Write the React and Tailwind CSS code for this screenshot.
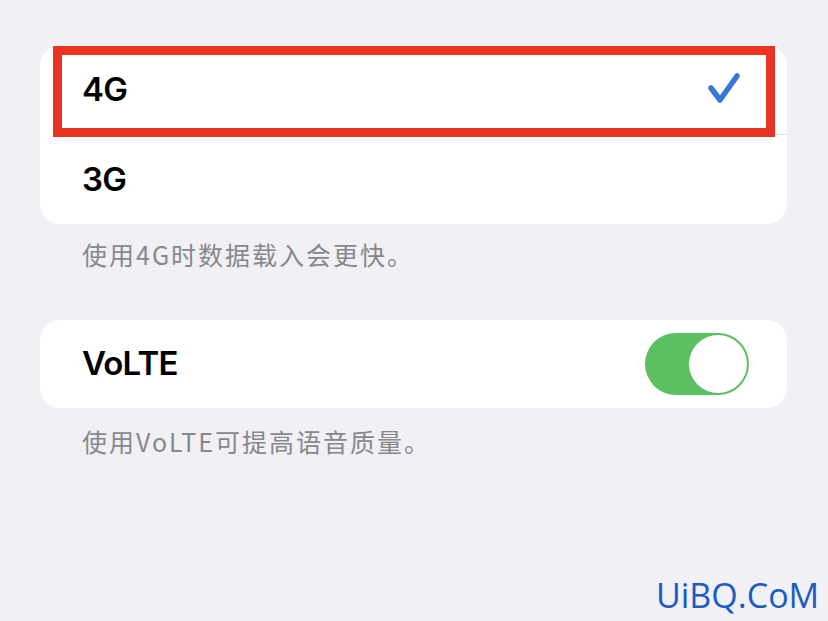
import React from "react";

const sans = { fontFamily: '"Inter", "Noto Sans CJK SC", sans-serif' };
const cjk = { fontFamily: '"Noto Sans CJK SC", sans-serif' };

function Check() {
  return (
    <svg width="36" height="36" viewBox="0 0 36 36" className="absolute left-[705px] top-[71px]">
      <path d="M6 17 L15 29 L32 5" fill="none" stroke="#3a76d6" strokeWidth="5.5" strokeLinecap="round" strokeLinejoin="round" />
    </svg>
  );
}

export default function App() {
  return (
    <div className="relative w-[828px] h-[621px] overflow-hidden bg-[#f0f0f5] flex flex-col" style={sans}>
      <div className="mt-[46px] mx-[40px] w-[747px] bg-white rounded-[20px] flex flex-col">
        <div className="relative h-[88px] flex items-center pl-[42px]">
          <span className="text-[33px] font-semibold text-black tracking-[-0.8px]">4G</span>
        </div>
        <div className="h-px bg-[#dedee3] ml-[42px]" />
        <div className="h-[89px] flex items-center pl-[42px]">
          <span className="text-[33px] font-semibold text-black tracking-[-0.8px]">3G</span>
        </div>
      </div>
      <div className="absolute left-[53px] top-[46px] w-[722px] h-[91px] border-[9px] border-[#ea3422]" />
      <Check />
      <p className="mt-[13px] pl-[82px] text-[25px] leading-[34px] text-[#88888c] tracking-[2px]" style={cjk}>
        使用4G时数据载入会更快。
      </p>

      <div className="mt-[49px] mx-[40px] w-[747px] h-[88px] bg-white rounded-[20px] flex items-center justify-between pl-[42px] pr-[38px]">
        <span className="text-[33px] font-semibold text-black tracking-[-0.8px]">VoLTE</span>
        <div className="w-[104px] h-[62px] rounded-full bg-[#5cbf62] flex items-center justify-end pr-[2px]">
          <div className="w-[58px] h-[58px] rounded-full bg-white" />
        </div>
      </div>
      <p className="mt-[16px] pl-[82px] text-[25px] leading-[34px] text-[#88888c] tracking-[2px]" style={cjk}>
        使用VoLTE可提高语音质量。
      </p>

      <div className="absolute left-[656px] top-[575px] text-[34px] leading-[40px] text-[#1a5cc0]" style={{ fontFamily: '"Open Sans", sans-serif' }}>
        UiBQ.CoM
      </div>
    </div>
  );
}
